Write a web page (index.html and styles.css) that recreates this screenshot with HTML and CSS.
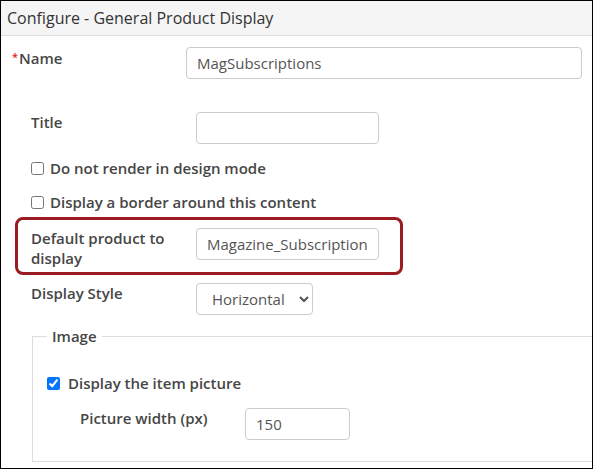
FILE: index.html
```html
<!DOCTYPE html>
<html>
<head>
    <title>Configure - General Product Display</title>
    <link rel="stylesheet" href="styles.css">
</head>
<body>
    <div class="panel">
        <div class="panel-heading">Configure - General Product Display</div>
        <div class="panel-body">
            <div class="form-row name-row">
                <label class="name-label" for="nameInput"><span class="required">*</span>Name</label>
                <input class="text-input wide" type="text" id="nameInput" value="MagSubscriptions">
            </div>

            <div class="form-row title-row">
                <label class="field-label" for="titleInput">Title</label>
                <input class="text-input" type="text" id="titleInput" value="">
            </div>

            <div class="check-row first">
                <input type="checkbox" id="noRender">
                <label for="noRender">Do not render in design mode</label>
            </div>
            <div class="check-row">
                <input type="checkbox" id="showBorder">
                <label for="showBorder">Display a border around this content</label>
            </div>

            <div class="highlight">
                <div class="form-row">
                    <label class="field-label narrow" for="productInput">Default product to display</label>
                    <input class="text-input" type="text" id="productInput" value="Magazine_Subscription">
                </div>
            </div>

            <div class="form-row style-row">
                <label class="field-label" for="styleSelect">Display Style</label>
                <select class="select-input" id="styleSelect">
                    <option>Horizontal</option>
                    <option>Vertical</option>
                </select>
            </div>

            <fieldset class="image-group">
                <legend>Image</legend>
                <div class="check-row picture-check">
                    <input type="checkbox" id="showPicture" checked>
                    <label for="showPicture">Display the item picture</label>
                </div>
                <div class="form-row width-row">
                    <label class="field-label" for="widthInput">Picture width (px)</label>
                    <input class="text-input small" type="text" id="widthInput" value="150">
                </div>
            </fieldset>
        </div>
    </div>
</body>
</html>
```

FILE: styles.css
```css
body {
    margin: 0;
    padding: 0;
    font-family: "Open Sans", Arial, sans-serif;
    color: #333;
    background-color: #fff;
}

.panel {
    width: 593px;
    height: 469px;
    box-sizing: border-box;
    border: 1px solid #000;
    overflow: hidden;
}

.panel-heading {
    height: 35px;
    box-sizing: border-box;
    padding: 6px 6px 0 6px;
    background-color: #f5f5f5;
    border-bottom: 1px solid #ddd;
    font-size: 16px;
    line-height: 22px;
    color: #333;
}

.panel-body {
    padding-top: 11px;
}

.form-row {
    display: flex;
    align-items: flex-start;
}

.field-label,
.name-label {
    font-size: 15px;
    font-weight: 600;
    line-height: 20px;
    color: #464646;
}

.name-row {
    padding-left: 11px;
    padding-right: 10px;
}

.name-label {
    width: 174px;
    flex-shrink: 0;
}

.required {
    color: #d9232d;
    font-size: 11px;
    vertical-align: 3px;
    margin-right: 1px;
}

.field-label {
    width: 165px;
    flex-shrink: 0;
}

.title-row,
.style-row {
    padding-left: 30px;
}

.title-row {
    margin-top: 33px;
}

.text-input {
    width: 183px;
    height: 32px;
    box-sizing: border-box;
    padding: 0 10px;
    border: 1px solid #ccc;
    border-radius: 4px;
    font-family: "Open Sans", Arial, sans-serif;
    font-size: 15px;
    color: #555;
    background-color: #fff;
}

.text-input.wide {
    flex: 1;
    width: auto;
}

.text-input.small {
    width: 105px;
}

.check-row {
    display: flex;
    align-items: center;
    height: 20px;
    padding-left: 30px;
    margin-top: 14px;
    font-size: 15px;
    font-weight: 600;
    color: #464646;
}

.check-row input {
    width: 13px;
    height: 13px;
    margin: 0 6px 0 0;
}

.highlight {
    width: 388px;
    box-sizing: border-box;
    margin: 5px 0 0 14px;
    padding: 8px 0 4px 13px;
    border: 3px solid #9b1b22;
    border-radius: 8px;
}

.field-label.narrow {
    width: 165px;
}

.style-row {
    margin-top: 8px;
}

.select-input {
    width: 117px;
    height: 32px;
    padding: 0 4px 0 11px;
    border: 1px solid #ccc;
    border-radius: 4px;
    font-family: "Open Sans", Arial, sans-serif;
    font-size: 15px;
    color: #555;
    background-color: #fff;
}

.image-group {
    width: 600px;
    margin: 11px 0 0 31px;
    padding: 0 0 21px 14px;
    border: 1px solid #ddd;
}

.image-group legend {
    padding: 0 5px;
    font-size: 15px;
    font-weight: 600;
    line-height: 20px;
    color: #464646;
}

.picture-check {
    padding-left: 0;
    margin-top: 27px;
}

.picture-check input {
    margin-right: 8px;
}

.width-row {
    margin-top: 15px;
    padding-left: 33px;
}
```
